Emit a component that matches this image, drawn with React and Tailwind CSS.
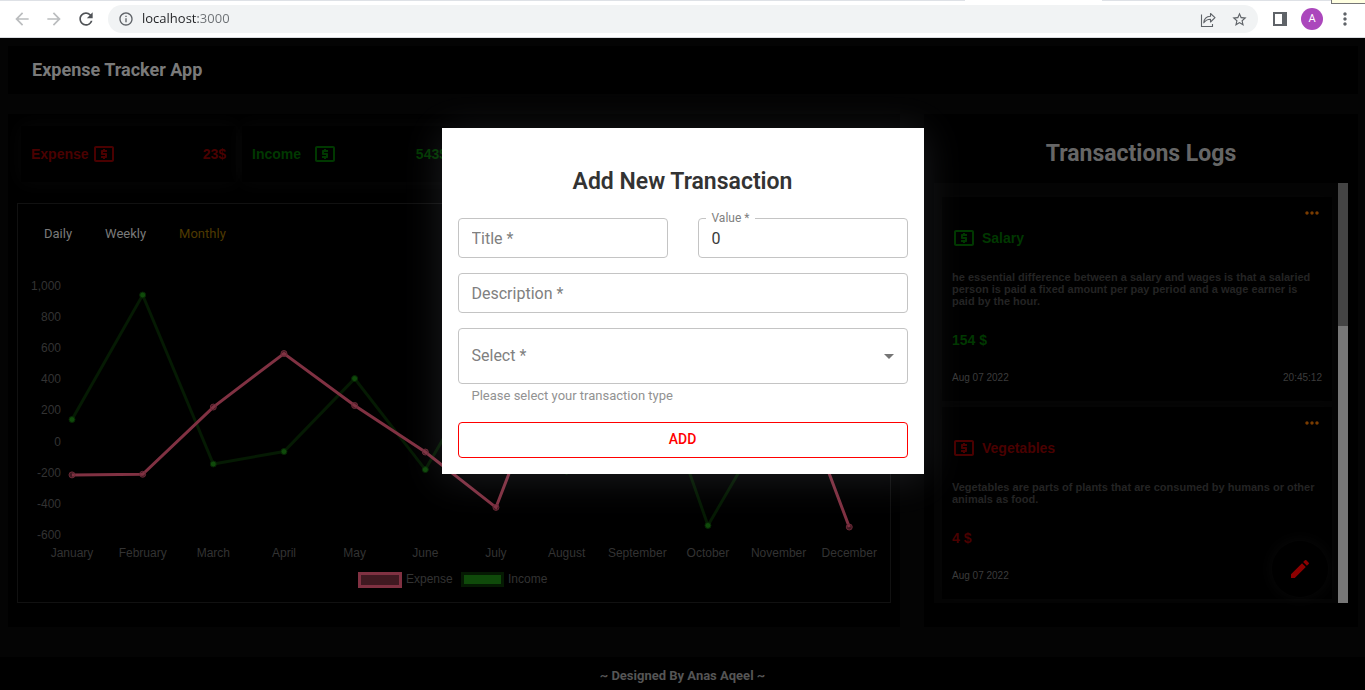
import React from "react";
import {
  MdArrowBack,
  MdArrowForward,
  MdRefresh,
  MdInfoOutline,
  MdStarBorder,
  MdMoreVert,
  MdMoreHoriz,
  MdLocalAtm,
  MdEdit,
  MdArrowDropDown,
} from "react-icons/md";

const MONTHS = ["January", "February", "March", "April", "May", "June", "July", "August", "September", "October", "November", "December"];
const TICKS = [1000, 800, 600, 400, 200, 0, -200, -400, -600];
const EXPENSE = [-214, -210, 222, 566, 232, -67, -423, 756, 500, 300, 659, -549];
const INCOME = [142, 942, -144, -64, 405, -180, 600, -190, 762, -539, 242, 400];

const xOf = (i) => 54 + i * 70.66;
const yOf = (v) => 16 + (1000 - v) * 0.1556;
const toPoints = (data) => data.map((v, i) => `${xOf(i)},${yOf(v)}`).join(" ");

function ShareIcon() {
  return (
    <svg width="18" height="18" viewBox="0 0 18 18" fill="none" stroke="#5f6368" strokeWidth="1.1" aria-hidden="true">
      <path d="M2.500 4.500V16.500H13.500V14" />
      <path d="M4.800 12.800C5 9 7.500 6.500 11.500 6.300V3.500L16 7.700L11.500 12V9.200C8.500 9.200 6.300 10.500 4.800 12.800Z" strokeLinejoin="round" />
    </svg>
  );
}

function SidePanelIcon() {
  return (
    <svg width="14" height="14" viewBox="0 0 14 14" aria-hidden="true">
      <path d="M0 0H14V14H0ZM2 2V12H9V2Z" fill="#5f6368" fillRule="evenodd" />
    </svg>
  );
}

function BrowserBar() {
  return (
    <div className="relative flex h-[38px] items-center border-t border-b border-t-[#dee1e6] border-b-[#dadce0] bg-white pr-2.5 pl-3 font-['Roboto',sans-serif]">
      <div className="absolute -top-px right-[263px] h-px w-[137px] bg-white" />
      <div className="absolute -top-px right-0 h-1 w-[34px] border-b border-l border-[#767676] bg-[#ffffe1]" />
      <button aria-label="Back" className="mr-3 text-[#bbbdbf]"><MdArrowBack size={20} /></button>
      <button aria-label="Forward" className="mr-3 text-[#bbbdbf]"><MdArrowForward size={20} /></button>
      <button aria-label="Reload" className="mr-3 text-[#505357]"><MdRefresh size={20} /></button>
      <div className="flex h-7 flex-1 items-center rounded-full bg-[#f1f3f4] pr-2.5 pl-2.5">
        <MdInfoOutline size={16} className="text-[#5f6368]" />
        <input
          aria-label="Address"
          defaultValue="localhost:3000"
          className="ml-2 min-w-0 flex-1 bg-[linear-gradient(90deg,#202124_56px,#6b6f73_56px)] bg-clip-text font-['Open_Sans',sans-serif] text-[13px] text-transparent outline-none"
        />
        <button aria-label="Share this page" className="mr-3.5"><ShareIcon /></button>
        <button aria-label="Bookmark" className="text-[#5f6368]"><MdStarBorder size={17} /></button>
      </div>
      <button aria-label="Side panel" className="mr-3.5 ml-[15px]"><SidePanelIcon /></button>
      <button aria-label="Profile" className="mr-3 flex h-[22px] w-[22px] items-center justify-center rounded-full bg-[#ab47bc] text-[11px] text-white">A</button>
      <button aria-label="Menu" className="text-[#5f6368]"><MdMoreVert size={20} /></button>
    </div>
  );
}

function SummaryCard({ label, value, tone }) {
  return (
    <div className={`flex h-14 w-[215px] items-center bg-black px-2.5 text-[14px] font-bold shadow-[0_0_20px_rgba(255,255,255,0.03)] ${tone}`}>
      <span className="w-[61px]">{label}</span>
      <MdLocalAtm size={24} />
      <span className="ml-auto">{value}</span>
    </div>
  );
}

function Chart() {
  return (
    <svg viewBox="0 0 872 332" className="block w-full" role="img" aria-label="Monthly expense and income">
      <g fontFamily="Liberation Sans, Arial, sans-serif" fontSize="12" fill="#333333">
        {TICKS.map((t) => (
          <text key={t} x="43" y={yOf(t) + 4} textAnchor="end">{t.toLocaleString("en-US")}</text>
        ))}
        {MONTHS.map((m, i) => (
          <text key={m} x={xOf(i)} y="287" textAnchor="middle">{m}</text>
        ))}
        <text x="388" y="313">Expense</text>
        <text x="490" y="313">Income</text>
      </g>
      <polyline points={toPoints(INCOME)} fill="none" stroke="#051a03" strokeWidth="3" />
      {INCOME.map((v, i) => (
        <circle key={i} cx={xOf(i)} cy={yOf(v)} r="3" fill="#0f4a0a" stroke="#062404" />
      ))}
      <polyline points={toPoints(EXPENSE)} fill="none" stroke="#803142" strokeWidth="3" />
      {EXPENSE.map((v, i) => (
        <circle key={i} cx={xOf(i)} cy={yOf(v)} r="3" fill="#803142" fillOpacity="0.5" stroke="#6a2937" />
      ))}
      <rect x="341.500" y="303.500" width="41" height="13" fill="#401921" stroke="#803142" strokeWidth="3" />
      <rect x="444.500" y="303.500" width="40" height="12" fill="#0f4a0a" stroke="#051a03" strokeWidth="3" />
    </svg>
  );
}

function LogCard({ title, text, amount, date, time, tone }) {
  return (
    <article className="bg-black px-2.5 pb-3.5 shadow-[0_0_16px_rgba(255,255,255,0.02)]">
      <div className="flex justify-end pt-1.5">
        <button aria-label={`Options for ${title}`} className="text-[#7a3c00]"><MdMoreHoriz size={20} /></button>
      </div>
      <h3 className={`mt-[3px] flex items-center gap-1.5 text-[14px] font-bold ${tone}`}>
        <MdLocalAtm size={24} />
        {title}
      </h3>
      <p className="mt-[21px] text-[11px] leading-3 font-bold text-[#242424]">{text}</p>
      <p className={`mt-[23px] text-[14px] leading-5 font-bold ${tone}`}>{amount}</p>
      <div className="mt-5 flex justify-between pb-px text-[10px] leading-4 text-[#3c3c3c]">
        <span>{date}</span>
        <span>{time}</span>
      </div>
    </article>
  );
}

function TransactionDialog() {
  const box = "block w-full rounded border border-[#c4c4c4] bg-white px-[13px] text-[16px] text-[#3a3a3a] outline-none";
  return (
    <form
      role="dialog"
      aria-labelledby="dialog-title"
      className="w-[482px] bg-white p-4 pt-9 font-['Roboto',sans-serif] shadow-[0_4px_38px_rgba(225,232,255,0.12)]"
    >
      <h2 id="dialog-title" className="text-center text-[23px] leading-9 font-semibold text-[#333333]">Add New Transaction</h2>
      <div className="mt-[18px] grid grid-cols-2 gap-[30px]">
        <input aria-label="Title" placeholder="Title *" className={`${box} h-10 placeholder:text-[#808080]`} />
        <div className="relative">
          <label htmlFor="value" className="absolute -top-2 left-2 bg-white px-1.5 text-[12px] leading-4 text-[#808080]">Value *</label>
          <input id="value" defaultValue="0" className={`${box} h-10`} />
        </div>
      </div>
      <input aria-label="Description" placeholder="Description *" className={`${box} mt-[15px] h-10 placeholder:text-[#808080]`} />
      <div className="relative mt-[15px]">
        <select aria-label="Transaction type" aria-describedby="type-help" defaultValue="" className={`${box} h-14 appearance-none text-[#808080]`}>
          <option value="">Select *</option>
          <option>Expense</option>
          <option>Income</option>
        </select>
        <MdArrowDropDown size={24} className="pointer-events-none absolute top-4 right-[7px] text-[#757575]" />
      </div>
      <p id="type-help" className="mt-1 ml-3.5 text-[13px] leading-4 text-[#929292]">Please select your transaction type</p>
      <button type="button" className="mt-[18px] block h-9 w-full rounded border border-[#ff0000] pb-0.5 text-[14px] font-medium text-[#ff0000]">ADD</button>
    </form>
  );
}

export default function App() {
  return (
    <div className="relative flex min-h-screen flex-col bg-black font-['Liberation_Sans',Arial,sans-serif]">
      <BrowserBar />

      <div className="flex flex-1 flex-col bg-[#040404]">
        <header className="mt-2 mr-[7px] ml-2 flex h-12 items-center bg-black px-6 pb-0.5 shadow-[0_0_20px_rgba(255,255,255,0.01)]">
          <h1 className="font-['Roboto',sans-serif] text-[18px] font-bold text-[#7a7a7a]">Expense Tracker App</h1>
        </header>

        <main className="mt-5 mr-[7px] mb-[30px] ml-2 flex gap-6">
          <section className="min-w-0 flex-1 bg-black px-[9px] pt-3 pb-6">
            <div className="flex gap-1.5 pl-1">
              <SummaryCard label="Expense" value="23$" tone="text-[#4a0000]" />
              <SummaryCard label="Income" value="543$" tone="text-[#003800]" />
            </div>
            <div className="mt-[21px] border border-[#111111] bg-black">
              <div className="flex h-[66px] items-center gap-[33px] px-[26px] pb-1.5 font-['Roboto',sans-serif] text-[13px]">
                <button className="text-[#7a7a7a]">Daily</button>
                <button className="text-[#7a7a7a]">Weekly</button>
                <button className="text-[#4f3a00]">Monthly</button>
              </div>
              <Chart />
            </div>
          </section>

          <aside className="w-[434px] bg-black px-2.5 pb-6">
            <h2 className="flex h-[69px] items-center justify-center pt-3 font-['Roboto',sans-serif] text-[23px] font-bold text-[#666666]">Transactions Logs</h2>
            <div className="flex h-[420px]">
              <div className="flex min-w-0 flex-1 flex-col gap-1.5 overflow-hidden bg-[#040404] pt-3.5 pr-1.5 pl-2">
                <LogCard
                  title="Salary"
                  text="he essential difference between a salary and wages is that a salaried person is paid a fixed amount per pay period and a wage earner is paid by the hour."
                  amount="154 $"
                  date="Aug 07 2022"
                  time="20:45:12"
                  tone="text-[#003800]"
                />
                <LogCard
                  title="Vegetables"
                  text="Vegetables are parts of plants that are consumed by humans or other animals as food."
                  amount="4 $"
                  date="Aug 07 2022"
                  time=""
                  tone="text-[#4a0000]"
                />
              </div>
              <div className="w-2.5 bg-[#777777]">
                <div className="h-[143px] bg-[#444444]" />
              </div>
            </div>
          </aside>
        </main>

        <footer className="flex flex-1 items-center justify-center bg-black pt-1 font-['Roboto',sans-serif] text-[13px] leading-4 font-bold text-[#555555]">
          ~ Designed By Anas Aqeel ~
        </footer>
      </div>

      <button
        aria-label="Add transaction"
        className="absolute right-[37px] bottom-[93px] flex h-14 w-14 items-center justify-center rounded-full bg-black text-[#8c0000] shadow-[0_0_16px_rgba(255,255,255,0.04)]"
      >
        <MdEdit size={24} />
      </button>

      <div className="absolute inset-x-0 top-32 flex justify-center">
        <TransactionDialog />
      </div>
    </div>
  );
}
